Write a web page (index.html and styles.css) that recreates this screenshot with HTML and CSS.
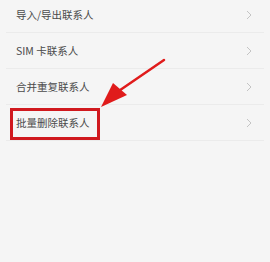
FILE: index.html
```html
<!DOCTYPE html>
<html>
  <head>
    <meta charset="utf-8">
    <link rel="stylesheet" href="styles.css">
  </head>
  <body>
    <div class="page">
      <ul class="menu">
        <li class="row">
          <span class="label">导入/导出联系人</span>
          <svg class="chev" viewBox="0 0 6 10"><polyline points="1,1 5,5 1,9"/></svg>
        </li>
        <li class="row">
          <span class="label">SIM 卡联系人</span>
          <svg class="chev" viewBox="0 0 6 10"><polyline points="1,1 5,5 1,9"/></svg>
        </li>
        <li class="row">
          <span class="label">合并重复联系人</span>
          <svg class="chev" viewBox="0 0 6 10"><polyline points="1,1 5,5 1,9"/></svg>
        </li>
        <li class="row">
          <span class="label marked">批量删除联系人</span>
          <svg class="chev" viewBox="0 0 6 10"><polyline points="1,1 5,5 1,9"/></svg>
        </li>
      </ul>

      <!-- red pointer arrow drawn over the list -->
      <svg class="arrow" width="270" height="262" viewBox="0 0 270 262">
        <line x1="164" y1="60" x2="110" y2="97" />
        <polygon points="101,107 113,83 127,95" />
      </svg>
    </div>
  </body>
</html>
```

FILE: styles.css
```css
body {
  margin: 0;
  padding: 0;
  font-family: "Noto Sans CJK SC", "Noto Sans", sans-serif;
  background-color: #f5f5f5;
  color: #4a4a4a;
}
.page {
  position: relative;
  width: 270px;
  height: 262px;
  overflow: hidden;
}
.menu {
  list-style: none;
  margin: -3px 0 0 0;
  padding: 0;
}
.row {
  display: flex;
  align-items: center;
  justify-content: space-between;
  height: 36px;
  margin: 0 6px;
  padding: 0 10px;
  border-bottom: 1px solid #ebebeb;
  box-sizing: border-box;
}
.label {
  font-size: 10.5px;
  line-height: 14px;
  position: relative;
}
.chev {
  width: 6px;
  height: 10px;
  margin-right: 2px;
}
.chev polyline {
  fill: none;
  stroke: #c4c4c4;
  stroke-width: 1;
}
/* red box round the highlighted item */
.marked::after {
  content: "";
  position: absolute;
  left: -6px;
  right: -10px;
  top: -8px;
  bottom: -10px;
  border: 3px solid #d0191e;
}
.arrow {
  position: absolute;
  top: 0;
  left: 0;
}
.arrow line {
  stroke: #e01b1b;
  stroke-width: 2.5;
  stroke-linecap: round;
}
.arrow polygon {
  fill: #e01b1b;
}
```
